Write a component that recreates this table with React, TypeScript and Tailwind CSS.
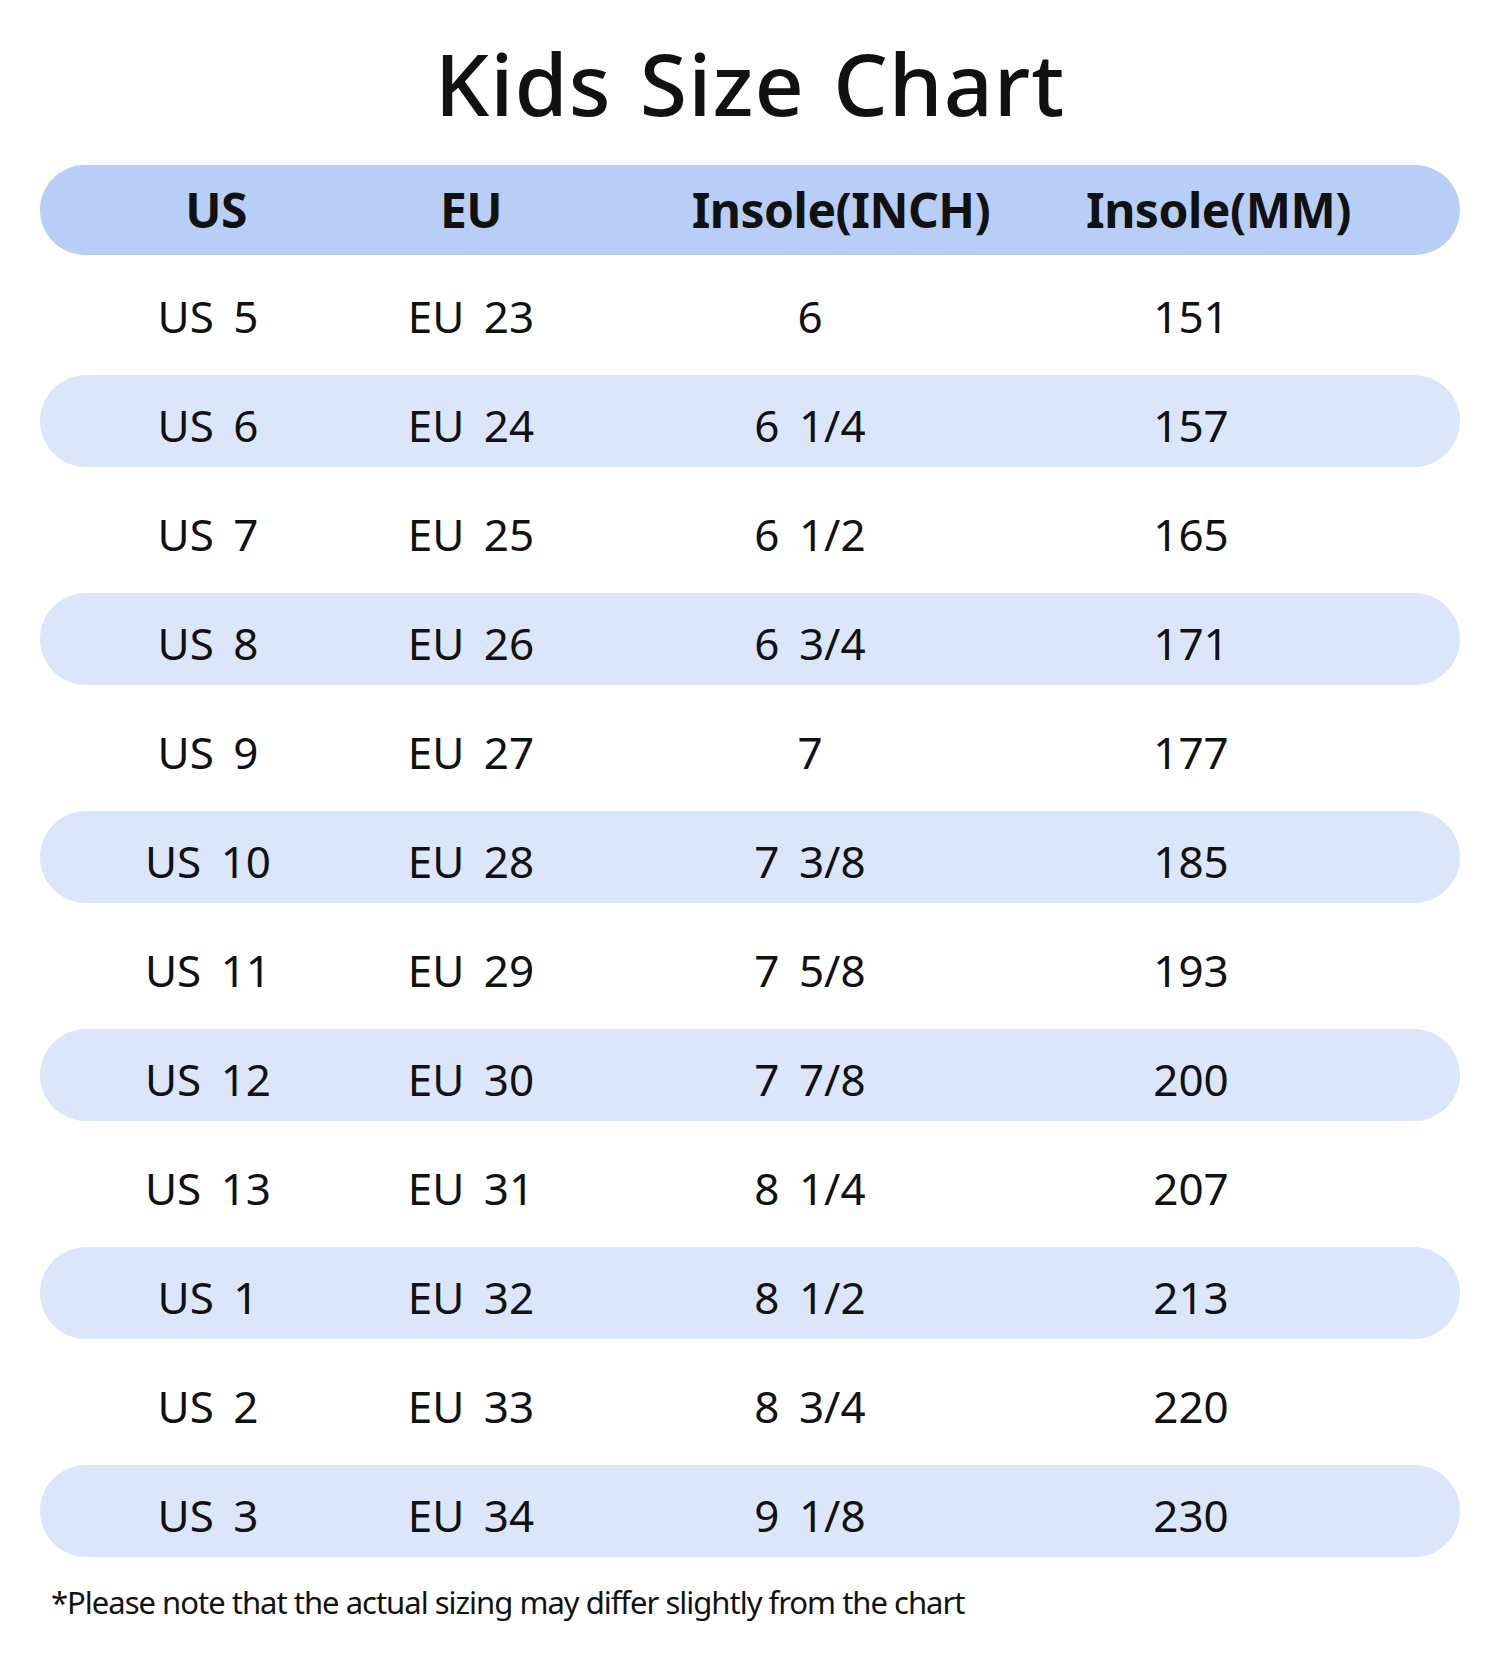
import React from 'react';

const rows = [
  ['US 5', 'EU 23', '6', '151'],
  ['US 6', 'EU 24', '6 1/4', '157'],
  ['US 7', 'EU 25', '6 1/2', '165'],
  ['US 8', 'EU 26', '6 3/4', '171'],
  ['US 9', 'EU 27', '7', '177'],
  ['US 10', 'EU 28', '7 3/8', '185'],
  ['US 11', 'EU 29', '7 5/8', '193'],
  ['US 12', 'EU 30', '7 7/8', '200'],
  ['US 13', 'EU 31', '8 1/4', '207'],
  ['US 1', 'EU 32', '8 1/2', '213'],
  ['US 2', 'EU 33', '8 3/4', '220'],
  ['US 3', 'EU 34', '9 1/8', '230'],
];

const cols = 'grid grid-cols-[336px_190px_488px_274px] items-center text-center';

const App = () => {
  return (
    <div className="w-[1500px] h-[1667px] bg-white text-[#111] font-['Noto_Sans',sans-serif] overflow-hidden">
      {/* Title */}
      <h1 className="pt-[40px] text-center text-[86px] leading-none font-medium tracking-[1px] [word-spacing:5px]">
        Kids Size Chart
      </h1>

      <div className="mx-[40px] mt-[39px]">
        {/* Header */}
        <div className={`${cols} h-[90px] rounded-full bg-[#b8cef6] text-[48px] font-bold tracking-[-0.5px]`}>
          <div className="pl-[16px]">US</div>
          <div>EU</div>
          <div className="pl-[62px]">Insole(INCH)</div>
          <div className="pl-[32px] text-left whitespace-nowrap">Insole(MM)</div>
        </div>

        {/* Rows */}
        <div className="mt-[7px] flex flex-col">
          {rows.map((r, i) => (
            <div key={i} className="h-[109px] pt-[4px]">
              <div
                className={`${cols} h-[92px] pt-[8px] rounded-full text-[44px] [word-spacing:8px] ${
                  i % 2 === 1 ? 'bg-[#dbe6fb]' : ''
                }`}
              >
                <div>{r[0]}</div>
                <div>{r[1]}</div>
                <div>{r[2]}</div>
                <div>{r[3]}</div>
              </div>
            </div>
          ))}
        </div>
      </div>

      {/* Note */}
      <p className="mt-[17px] pl-[51px] text-[31px] leading-none tracking-[-1px]">
        *Please note that the actual sizing may differ slightly from the chart
      </p>
    </div>
  );
};

export default App;
